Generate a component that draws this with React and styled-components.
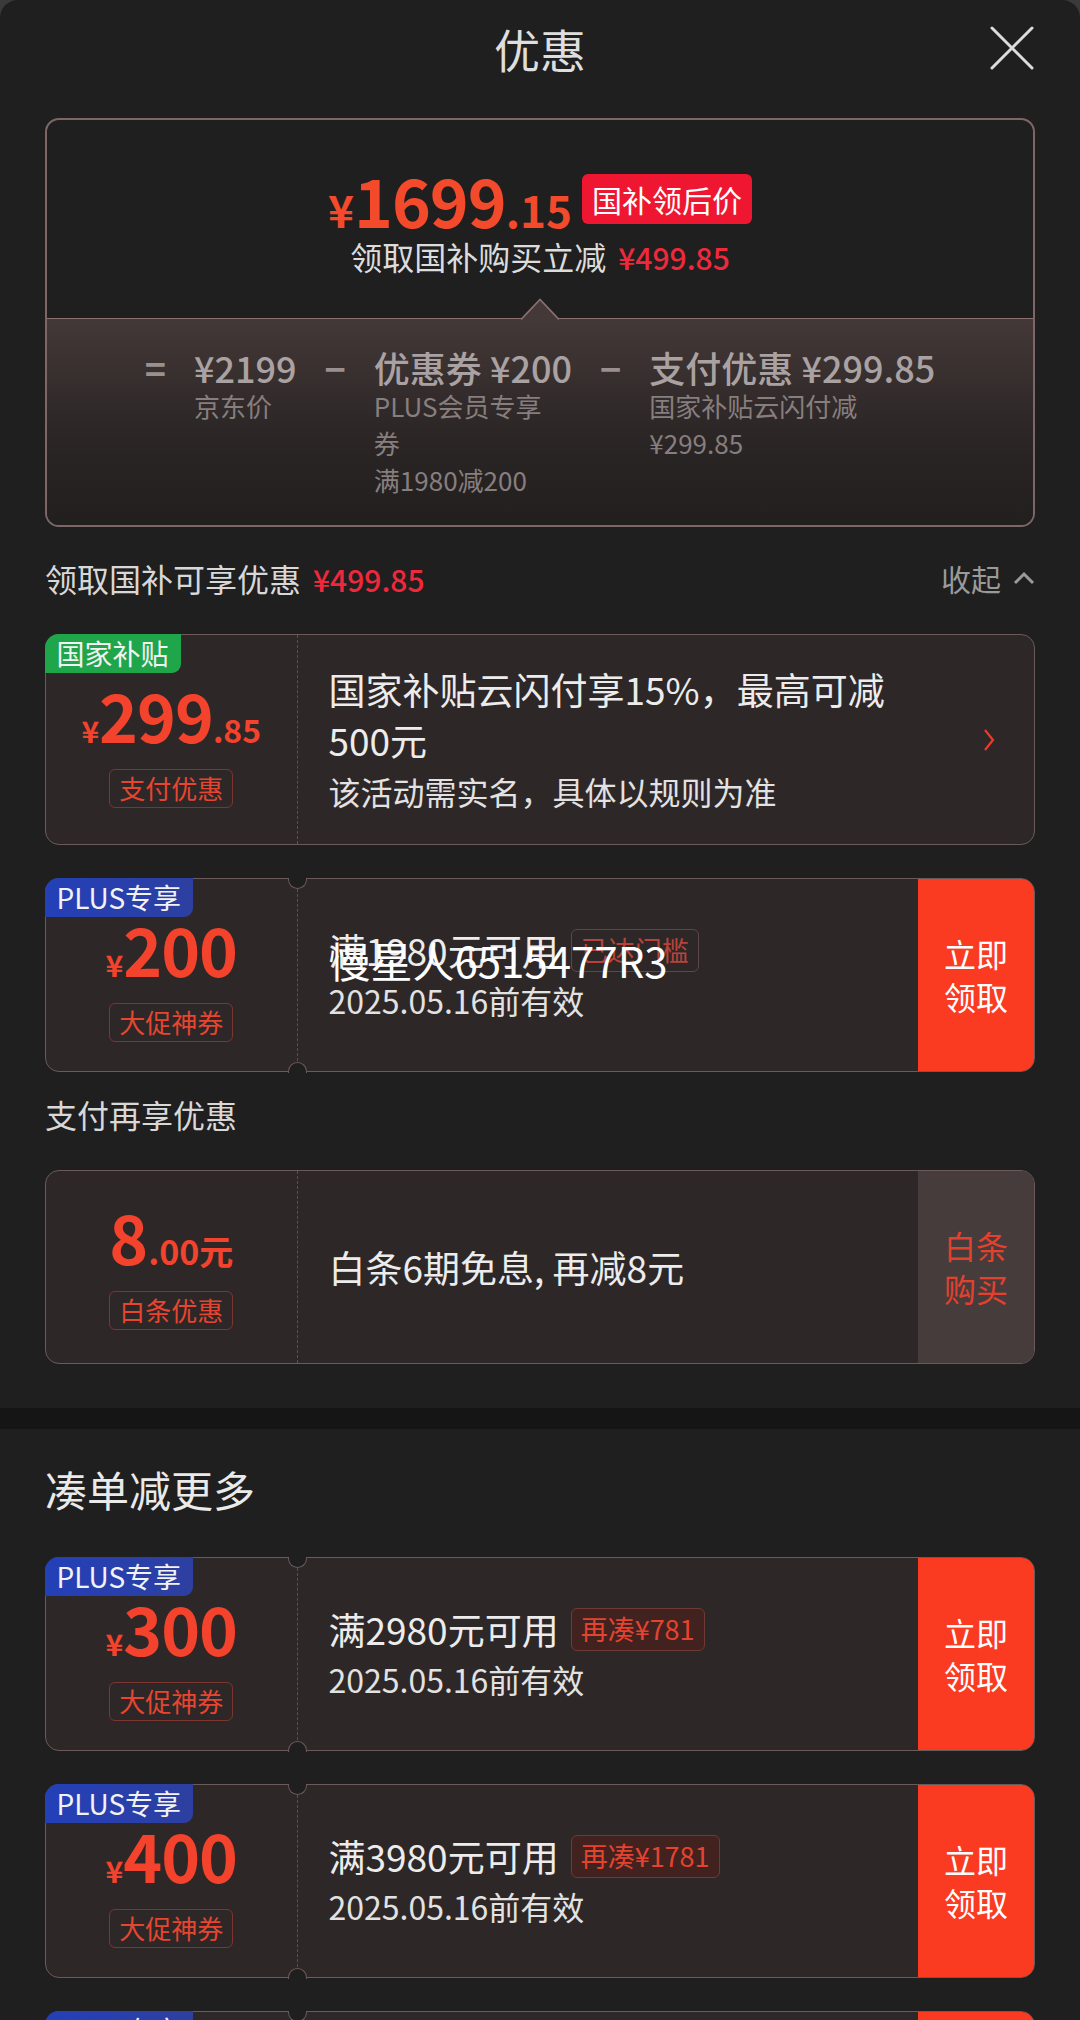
import React from 'react'
import styled, { createGlobalStyle } from 'styled-components'

const GlobalStyle = createGlobalStyle`
  body{
    margin:0;
    background:#3a3a3a;
    font-family:"Noto Sans CJK SC","Noto Sans",sans-serif;
  }
`

const Page = styled.div`
  width:1080px;
`

const Sheet = styled.section`
  background:#1f1f1f;
  border-radius:18px 18px 0 0;
  padding:0 45px 44px;
`

const Header = styled.header`
  height:96px;
  display:grid;
  grid-template-columns:1fr auto 1fr;
  align-items:center;
`

const Title = styled.h1`
  grid-column:2;
  margin:0;
  font-size:46px;
  font-weight:400;
  color:#dedede;
`

const CloseBtn = styled.button`
  justify-self:end;
  width:46px;
  height:46px;
  padding:0;
  border:none;
  background:none;
  display:flex;
  align-items:center;
  justify-content:center;
`

const SummaryBox = styled.div`
  margin-top:22px;
  border:2px solid #7e6666;
  border-radius:14px;
  overflow:hidden;
`

const Upper = styled.div`
  height:198px;
  box-sizing:border-box;
  padding-top:46px;
  display:flex;
  flex-direction:column;
  align-items:center;
`

const PriceRow = styled.div`
  display:flex;
  align-items:center;
  gap:10px;
`

const BigPrice = styled.div`
  color:#f34a2c;
  font-weight:700;
  line-height:1;
  white-space:nowrap;
`

const PricePart = styled.span`
  font-size:${p => p.$size}px;
  letter-spacing:${p => p.$ls || 0}px;
`

const RedTag = styled.span`
  background:#ee1630;
  color:#fff;
  font-size:30px;
  line-height:50px;
  padding:0 10px;
  border-radius:6px;
`

const SubLine = styled.div`
  margin-top:2px;
  font-size:32px;
  line-height:44px;
  color:#dcdcdc;
`

const RedAmount = styled.span`
  color:#f0283c;
  font-size:30px;
  font-weight:500;
  margin-left:12px;
`

const Lower = styled.div`
  position:relative;
  border-top:1.5px solid #8a7070;
  background:linear-gradient(180deg,#443838 0%,#2c2626 55%,#221f1f 100%);
  padding:28px 0 27px;
  display:flex;
  justify-content:center;
  align-items:flex-start;
  gap:28px;
`

const NotchArrow = styled.svg`
  position:absolute;
  left:50%;
  top:-21.5px;
  transform:translateX(-50%);
`

const Op = styled.span`
  font-size:36px;
  line-height:40px;
  font-weight:700;
  color:#9a9090;
`

const Term = styled.div`
  display:flex;
  flex-direction:column;
`

const TermMain = styled.div`
  font-size:36px;
  line-height:40px;
  font-weight:500;
  color:#aaa2a2;
  white-space:nowrap;
`

const TermSub = styled.div`
  font-size:26px;
  line-height:37px;
  color:#877e7e;
  max-width:${p => p.$max ? p.$max + 'px' : 'none'};
`

const SectionRow = styled.div`
  height:60px;
  margin:${p => p.$top}px 0 26px;
  display:flex;
  align-items:center;
  justify-content:space-between;
`

const SectionLabel = styled.div`
  font-size:32px;
  color:#d8d8d8;
`

const Collapse = styled.div`
  display:flex;
  align-items:center;
  gap:12px;
  font-size:30px;
  color:#9a9a9a;
`

const CardList = styled.div`
  display:flex;
  flex-direction:column;
  gap:33px;
`

const Card = styled.div`
  position:relative;
  display:flex;
  height:${p => p.$h}px;
  border:1.5px solid #6c5a5a;
  border-radius:14px;
  background:#2e2727;
`

const Badge = styled.div`
  position:absolute;
  top:-1.5px;
  left:-1.5px;
  height:39px;
  padding:0 12px;
  display:flex;
  align-items:center;
  border-radius:14px 0 9px 0;
  font-size:28px;
  color:#f2f2f2;
  background:${p => p.$kind === 'green' ? '#1fa64b' : 'linear-gradient(90deg,#2440b8,#2d3fa0)'};
  z-index:2;
`

const Notch = styled.span`
  position:absolute;
  left:241.5px;
  width:17px;
  height:10px;
  background:#1f1f1f;
  border:1.5px solid #6c5a5a;
  z-index:2;
  ${p => p.$bottom
    ? 'bottom:-1.5px; border-bottom:none; border-radius:10px 10px 0 0;'
    : 'top:-1.5px; border-top:none; border-radius:0 0 10px 10px;'}
`

const LeftCol = styled.div`
  width:251.5px;
  flex-shrink:0;
  box-sizing:border-box;
  border-right:1.5px dashed #5f4f4f;
  display:flex;
  flex-direction:column;
  align-items:center;
  justify-content:center;
  padding-top:${p => p.$pt || 0}px;
`

const CouponPrice = styled.div`
  color:#f4432c;
  font-weight:700;
  line-height:56px;
  white-space:nowrap;
`

const OutlineTag = styled.span`
  margin-top:5px;
  height:39px;
  box-sizing:border-box;
  padding:0 9px;
  border:1.5px solid #7d3530;
  border-radius:6px;
  font-size:26px;
  line-height:36px;
  color:#e6452f;
`

const Body = styled.div`
  flex:1;
  padding-left:31px;
  display:flex;
  flex-direction:column;
  justify-content:center;
`

const BodyTitle = styled.div`
  position:relative;
  display:flex;
  align-items:center;
  gap:12px;
  font-size:37px;
  line-height:${p => p.$lh || 50}px;
  color:#ececec;
  max-width:${p => p.$max ? p.$max + 'px' : 'none'};
`

const BodyText = styled.div`
  font-size:32px;
  line-height:50px;
  color:#e2e2e2;
`

const SmallTag = styled.span`
  height:43px;
  box-sizing:border-box;
  padding:0 9px;
  border:1.5px solid ${p => p.$filled ? '#6e3a35' : '#5e4747'};
  background:${p => p.$filled ? '#42221f' : 'transparent'};
  border-radius:6px;
  font-size:27px;
  line-height:40px;
  color:${p => p.$filled ? '#e4442f' : '#b8433a'};
`

const Watermark = styled.span`
  position:absolute;
  left:0;
  top:10px;
  font-size:42px;
  line-height:50px;
  color:#fff;
  white-space:nowrap;
  pointer-events:none;
`

const ActionBtn = styled.button`
  width:116px;
  flex-shrink:0;
  margin:0;
  border:none;
  padding:0 24px;
  border-radius:0 12.5px 12.5px 0;
  background:${p => p.$muted ? '#463c3c' : '#fa3b22'};
  color:${p => p.$muted ? '#e4402e' : '#fff'};
  font-family:inherit;
  font-size:32px;
  line-height:43px;
`

const ArrowSlot = styled.div`
  display:flex;
  align-items:center;
  padding-right:38px;
`

const Band = styled.div`
  height:21px;
  background:#151515;
`

const MoreSection = styled.section`
  background:#1f1f1f;
  padding:30px 45px 60px;
`

const MoreTitle = styled.h2`
  margin:0 0 38px;
  font-size:42px;
  line-height:60px;
  font-weight:400;
  color:#eaeaea;
`

const CloseIcon = () => (
  <svg width="44" height="44" viewBox="0 0 44 44">
    <path d="M2 2 L42 42 M42 2 L2 42" stroke="#dcdcdc" strokeWidth="3" strokeLinecap="round" />
  </svg>
)

const ChevronUp = () => (
  <svg width="22" height="14" viewBox="0 0 22 14">
    <polyline points="2,12 11,3 20,12" fill="none" stroke="#9a9a9a" strokeWidth="3" />
  </svg>
)

const ChevronRight = () => (
  <svg width="14" height="24" viewBox="0 0 14 24">
    <polyline points="3,2 11,12 3,22" fill="none" stroke="#ee3a2a" strokeWidth="2.2" />
  </svg>
)

const PlusCoupon = ({ amount, need, tag, filled, watermark }) => (
  <Card $h={192}>
    <Badge>PLUS专享</Badge>
    <Notch />
    <Notch $bottom />
    <LeftCol $pt={12}>
      <CouponPrice>
        <PricePart $size={30}>¥</PricePart>
        <PricePart $size={66} $ls={-1}>{amount}</PricePart>
      </CouponPrice>
      <OutlineTag>大促神券</OutlineTag>
    </LeftCol>
    <Body>
      <BodyTitle>
        <span>满{need}元可用</span>
        <SmallTag $filled={filled}>{tag}</SmallTag>
        {watermark && <Watermark>{watermark}</Watermark>}
      </BodyTitle>
      <BodyText>2025.05.16前有效</BodyText>
    </Body>
    <ActionBtn>立即领取</ActionBtn>
  </Card>
)

const App = () => {
  return (
    <Page>
      <GlobalStyle />
      <Sheet>
        <Header>
          <Title>优惠</Title>
          <CloseBtn><CloseIcon /></CloseBtn>
        </Header>

        <SummaryBox>
          <Upper>
            <PriceRow>
              <BigPrice>
                <PricePart $size={44}>¥</PricePart>
                <PricePart $size={66} $ls={-1}>1699</PricePart>
                <PricePart $size={44}>.15</PricePart>
              </BigPrice>
              <RedTag>国补领后价</RedTag>
            </PriceRow>
            <SubLine>
              领取国补购买立减<RedAmount>¥499.85</RedAmount>
            </SubLine>
          </Upper>
          <Lower>
            <NotchArrow width="38" height="23" viewBox="0 0 38 23">
              <path d="M0 23 L0 21.5 L19 1.5 L38 21.5 L38 23 Z" fill="#443838" />
              <polyline points="0,21.5 19,1.5 38,21.5" fill="none" stroke="#8a7070" strokeWidth="1.8" />
            </NotchArrow>
            <Op>=</Op>
            <Term>
              <TermMain>¥2199</TermMain>
              <TermSub>京东价</TermSub>
            </Term>
            <Op>−</Op>
            <Term>
              <TermMain>优惠券 ¥200</TermMain>
              <TermSub $max={180}>PLUS会员专享券</TermSub>
              <TermSub>满1980减200</TermSub>
            </Term>
            <Op>−</Op>
            <Term>
              <TermMain>支付优惠 ¥299.85</TermMain>
              <TermSub>国家补贴云闪付减</TermSub>
              <TermSub>¥299.85</TermSub>
            </Term>
          </Lower>
        </SummaryBox>

        <SectionRow $top={21}>
          <SectionLabel>
            领取国补可享优惠<RedAmount>¥499.85</RedAmount>
          </SectionLabel>
          <Collapse>收起<ChevronUp /></Collapse>
        </SectionRow>

        <CardList>
          <Card $h={209}>
            <Badge $kind="green">国家补贴</Badge>
            <LeftCol $pt={14}>
              <CouponPrice>
                <PricePart $size={30}>¥</PricePart>
                <PricePart $size={66} $ls={-1}>299</PricePart>
                <PricePart $size={32}>.85</PricePart>
              </CouponPrice>
              <OutlineTag>支付优惠</OutlineTag>
            </LeftCol>
            <Body>
              <BodyTitle $lh={51} $max={590}>国家补贴云闪付享15%，最高可减500元</BodyTitle>
              <BodyText>该活动需实名，具体以规则为准</BodyText>
            </Body>
            <ArrowSlot><ChevronRight /></ArrowSlot>
          </Card>

          <PlusCoupon amount="200" need="1980" tag="已达门槛" watermark="慢星人6515477R3" />
        </CardList>

        <SectionRow $top={12}>
          <SectionLabel>支付再享优惠</SectionLabel>
        </SectionRow>

        <Card $h={192}>
          <LeftCol $pt={4}>
            <CouponPrice>
              <PricePart $size={66}>8</PricePart>
              <PricePart $size={34}>.00元</PricePart>
            </CouponPrice>
            <OutlineTag>白条优惠</OutlineTag>
          </LeftCol>
          <Body>
            <BodyTitle>白条6期免息, 再减8元</BodyTitle>
          </Body>
          <ActionBtn $muted>白条购买</ActionBtn>
        </Card>
      </Sheet>

      <Band />

      <MoreSection>
        <MoreTitle>凑单减更多</MoreTitle>
        <CardList>
          <PlusCoupon amount="300" need="2980" tag="再凑¥781" filled />
          <PlusCoupon amount="400" need="3980" tag="再凑¥1781" filled />
          <PlusCoupon amount="500" need="4980" tag="再凑¥2781" filled />
        </CardList>
      </MoreSection>
    </Page>
  )
}

export default App
